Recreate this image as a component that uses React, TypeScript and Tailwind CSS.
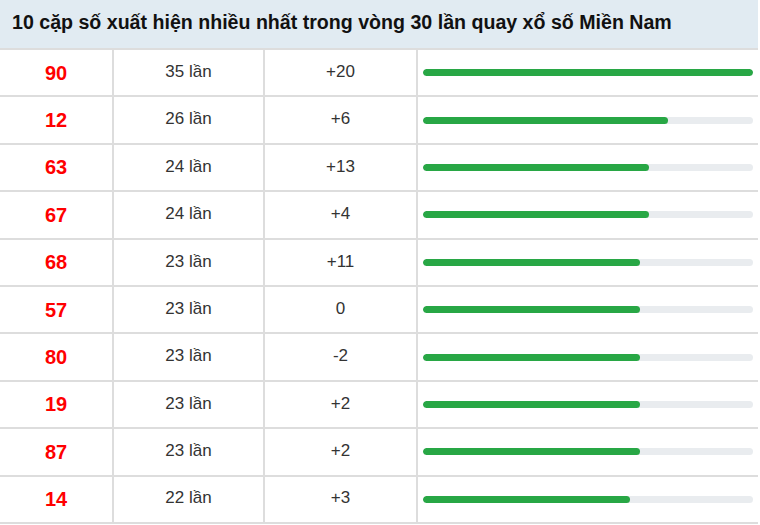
import React from "react";

const rows = [
  { n: "90", c: 35, d: "+20" },
  { n: "12", c: 26, d: "+6" },
  { n: "63", c: 24, d: "+13" },
  { n: "67", c: 24, d: "+4" },
  { n: "68", c: 23, d: "+11" },
  { n: "57", c: 23, d: "0" },
  { n: "80", c: 23, d: "-2" },
  { n: "19", c: 23, d: "+2" },
  { n: "87", c: 23, d: "+2" },
  { n: "14", c: 22, d: "+3" },
];

export default function App() {
  const max = 35;
  return (
    <div className="w-[760px] h-[525px] bg-white" style={{ fontFamily: '"Liberation Sans", Arial, sans-serif' }}>
      <div className="w-[758px]">
        <div className="h-[50px] bg-[#e1ebf2] border-b-2 border-[#dddddd] flex items-center pl-[12px] pb-[3px]">
          <span className="text-[19.6px] font-bold text-[#111111]">
            10 cặp số xuất hiện nhiều nhất trong vòng 30 lần quay xổ số Miền Nam
          </span>
        </div>
        {rows.map((r, i) => (
          <div key={i} className="h-[47.4px] border-b-2 border-[#dddddd] flex">
            <div className="w-[114px] border-r-2 border-[#dddddd] flex items-center justify-center text-[20px] font-bold text-[#ff0000]">
              {r.n}
            </div>
            <div className="w-[151px] border-r-2 border-[#dddddd] flex items-center justify-center text-[17px] text-[#333333] pb-[2px]">
              {r.c} lần
            </div>
            <div className="w-[153px] border-r-2 border-[#dddddd] flex items-center justify-center text-[17px] text-[#333333] pb-[2px]">
              {r.d}
            </div>
            <div className="flex-1 flex items-center pl-[5px] pr-[5px]">
              <div className="w-[330px] h-[7px] rounded-full bg-[#e9ecef] overflow-hidden">
                <div className="h-full rounded-full bg-[#28a745]" style={{ width: `${(r.c / max) * 100}%` }} />
              </div>
            </div>
          </div>
        ))}
      </div>
    </div>
  );
}
